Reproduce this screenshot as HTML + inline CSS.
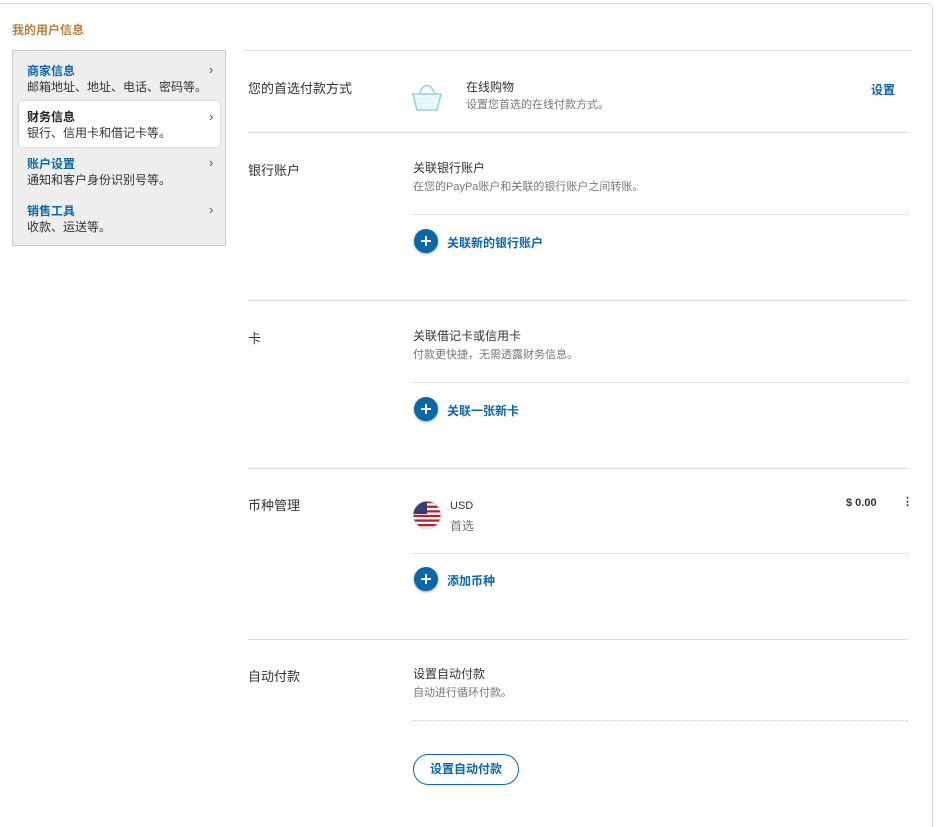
<!DOCTYPE html>
<html><head><meta charset="utf-8"><style>
*{margin:0;padding:0;box-sizing:border-box}
html,body{width:937px;height:827px;overflow:hidden}
body{background:#fff;font-family:"Liberation Sans","Noto Sans CJK SC",sans-serif;font-size:12px;color:#333;position:relative}
.a{position:absolute;white-space:nowrap}
.card{position:absolute;left:0;top:3px;width:933px;height:830px;border:1px solid #d8d8e0;border-radius:0 6px 0 0;border-left:none;border-bottom:none}
.side{position:absolute;left:12px;top:50px;width:214px;height:196px;background:#eee;border:1px solid #ccc;border-radius:2px}
.bl{color:#0b68a8;font-weight:bold}
.sub{color:#777;font-size:11px}
.hl{position:absolute;left:248px;width:660px;height:1px;background:#ddd}
.dl{position:absolute;left:413px;width:495px;border-top:1px dotted #ccc}
.plus{position:absolute;width:24px;height:24px;border-radius:50%;background:#0b68a8;box-shadow:0 1px 2px #999}
.plus:before{content:"";position:absolute;left:7px;top:11px;width:10px;height:1.6px;background:#fff}
.plus:after{content:"";position:absolute;left:11.2px;top:7px;width:1.6px;height:10px;background:#fff}
.chev{position:absolute;left:209px;color:#555;font-size:13px}
</style></head><body>
<div class="card"></div>
<div class="a" style="left:12px;top:21px;color:#b8803c;font-weight:bold;font-size:12px">我的用户信息</div>
<div class="side"></div>
<div style="position:absolute;left:19px;top:101px;width:201px;height:46px;background:#fff;border-radius:3px;box-shadow:0 0 2px #bbb"></div>
<div class="a bl" style="left:27px;top:62px">商家信息</div><div class="a" style="left:27px;top:78px">邮箱地址、地址、电话、密码等。</div><div class="chev" style="top:62px">›</div>
<div class="a" style="left:27px;top:108px;font-weight:bold;color:#222">财务信息</div><div class="a" style="left:27px;top:124px">银行、信用卡和借记卡等。</div><div class="chev" style="top:109px">›</div>
<div class="a bl" style="left:27px;top:155px">账户设置</div><div class="a" style="left:27px;top:171px">通知和客户身份识别号等。</div><div class="chev" style="top:155px">›</div>
<div class="a bl" style="left:27px;top:202px">销售工具</div><div class="a" style="left:27px;top:218px">收款、运送等。</div><div class="chev" style="top:202px">›</div>

<div style="position:absolute;left:244px;top:50px;width:668px;height:1px;background:#ddd"></div>
<div class="a" style="left:248px;top:78px;font-size:13px">您的首选付款方式</div>
<svg class="a" style="left:411px;top:79px" width="32" height="34" viewBox="0 0 32 34"><path d="M8 15 Q16 -2 24 15" fill="none" stroke="#8fd3d8" stroke-width="1.5"/><path d="M2 15 H30 L26 31 H6 Z" fill="#eaf8f9" stroke="#8fd3d8" stroke-width="1.5"/><path d="M8 20h16M9 24h14M10 28h12" stroke="#b8e6e9" stroke-dasharray="1 2"/></svg>
<div class="a" style="left:466px;top:78px;font-size:12px">在线购物</div>
<div class="a sub" style="left:466px;top:96px">设置您首选的在线付款方式。</div>
<div class="a bl" style="left:871px;top:81px">设置</div>
<div class="hl" style="top:132px"></div>

<div class="a" style="left:248px;top:160px;font-size:13px">银行账户</div>
<div class="a" style="left:413px;top:159px">关联银行账户</div>
<div class="a sub" style="left:413px;top:178px">在您的PayPa账户和关联的银行账户之间转账。</div>
<div class="dl" style="top:214px"></div>
<div class="plus" style="left:414px;top:229px"></div><div class="a bl" style="left:447px;top:234px">关联新的银行账户</div>
<div class="hl" style="top:300px"></div>

<div class="a" style="left:248px;top:328px;font-size:13px">卡</div>
<div class="a" style="left:413px;top:327px">关联借记卡或信用卡</div>
<div class="a sub" style="left:413px;top:346px">付款更快捷，无需透露财务信息。</div>
<div class="dl" style="top:382px"></div>
<div class="plus" style="left:414px;top:397px"></div><div class="a bl" style="left:447px;top:402px">关联一张新卡</div>
<div class="hl" style="top:468px"></div>

<div class="a" style="left:248px;top:495px;font-size:13px">币种管理</div>
<svg class="a" style="left:412px;top:500px" width="30" height="30" viewBox="0 0 30 30"><defs><clipPath id="c"><circle cx="15" cy="15" r="14"/></clipPath></defs><g clip-path="url(#c)"><rect width="30" height="30" fill="#fff"/><g fill="#b22234"><rect y="1" width="30" height="2.3"/><rect y="5.6" width="30" height="2.3"/><rect y="10.2" width="30" height="2.3"/><rect y="14.8" width="30" height="2.3"/><rect y="19.4" width="30" height="2.3"/><rect y="24" width="30" height="2.3"/><rect y="28.6" width="30" height="2.3"/></g><rect width="15" height="14" fill="#3c3b6e"/></g><circle cx="15" cy="15" r="14" fill="none" stroke="#ddd"/></svg>
<div class="a" style="left:450px;top:500px;font-size:11px">USD</div>
<div class="a sub" style="left:450px;top:517px;font-size:12px">首选</div>
<div class="a" style="left:846px;top:497px;font-weight:bold;font-size:11px">$ 0.00</div>
<div class="a" style="left:902px;top:495px;font-weight:bold;font-size:11px">⋮</div>
<div class="dl" style="top:553px"></div>
<div class="plus" style="left:414px;top:567px"></div><div class="a bl" style="left:447px;top:572px">添加币种</div>
<div class="hl" style="top:639px"></div>

<div class="a" style="left:248px;top:666px;font-size:13px">自动付款</div>
<div class="a" style="left:413px;top:665px">设置自动付款</div>
<div class="a sub" style="left:413px;top:684px">自动进行循环付款。</div>
<div class="dl" style="top:720px"></div>
<div style="position:absolute;left:413px;top:754px;width:106px;height:31px;border:1px solid #0b68a8;border-radius:16px;text-align:center;line-height:29px" class="bl">设置自动付款</div>
</body></html>
